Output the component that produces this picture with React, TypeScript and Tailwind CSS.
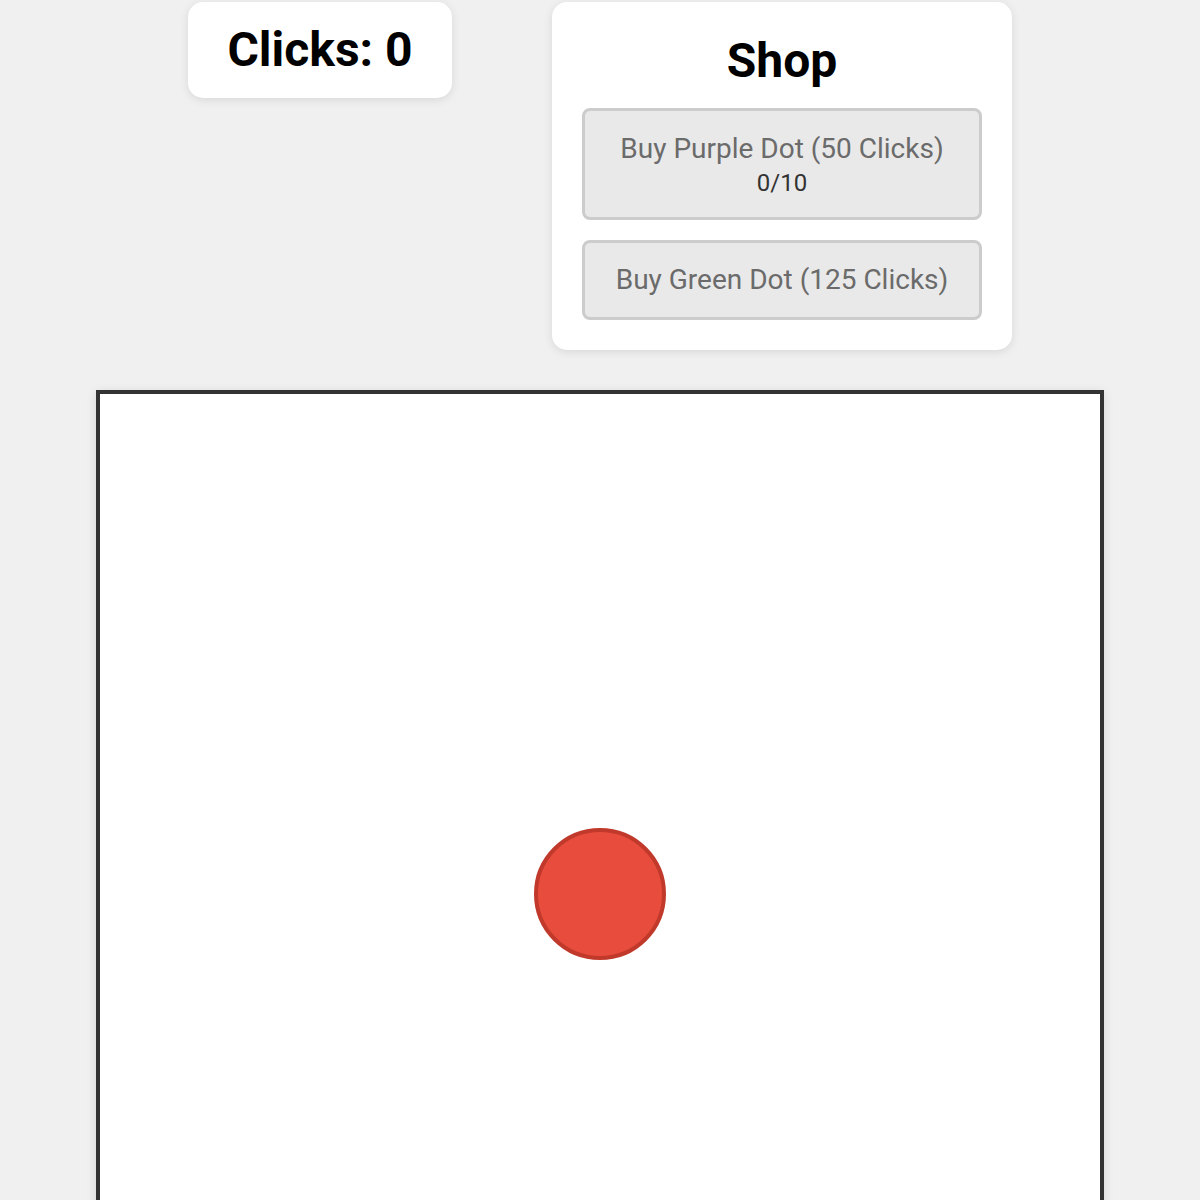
import React, { useState } from 'react';

export default function App() {
  const [clicks, setClicks] = useState(0);
  const purpleOwned = 0;

  return (
    <div className="min-h-screen bg-[#f0f0f0] font-['Roboto',sans-serif] text-black overflow-hidden">
      <div className="flex justify-center items-start gap-[100px] pt-[2px]">
        <div className="w-[264px] bg-white rounded-[15px] shadow-[0_2px_10px_rgba(0,0,0,0.1)] py-5 text-center">
          <h2 className="text-[48px] font-bold leading-[56px]">Clicks: {clicks}</h2>
        </div>
        <div className="w-[460px] bg-white rounded-[15px] shadow-[0_2px_10px_rgba(0,0,0,0.1)] px-[30px] pt-[31px] pb-[30px] flex flex-col items-center">
          <h2 className="text-[48px] font-bold leading-[56px] mb-[19px]">Shop</h2>
          <div className="w-full flex flex-col gap-5">
            <button
              type="button"
              disabled
              className="w-full rounded-lg border-[3px] border-[#cccccc] bg-[#e9e9e9] pt-[21px] pb-4 text-[28px] leading-[33px] text-[#6b6b6b] flex flex-col items-center"
            >
              <span>Buy Purple Dot (50 Clicks)</span>
              <span className="text-[24px] leading-[36px] text-[#333333]">{purpleOwned}/10</span>
            </button>
            <button
              type="button"
              disabled
              className="w-full rounded-lg border-[3px] border-[#cccccc] bg-[#e9e9e9] py-5 text-[28px] leading-[34px] text-[#6b6b6b]"
            >
              Buy Green Dot (125 Clicks)
            </button>
          </div>
        </div>
      </div>
      <div className="mt-10 mx-auto w-[1008px] h-[1008px] border-4 border-[#333333] bg-white shadow-[0_2px_10px_rgba(0,0,0,0.1)] flex items-center justify-center">
        <button
          type="button"
          onClick={() => setClicks(c => c + 1)}
          className="w-[132px] h-[132px] rounded-full bg-[#e74c3c] border-4 border-[#c0392b]"
          aria-label="dot"
        />
      </div>
    </div>
  );
}
